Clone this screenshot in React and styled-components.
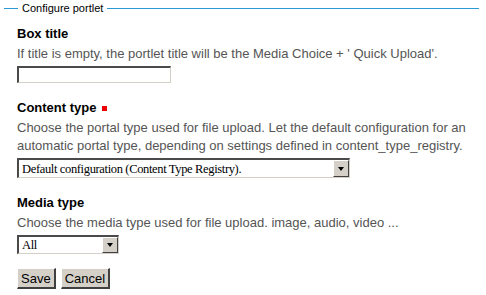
import React from "react";
import styled, { createGlobalStyle } from "styled-components";

const Global = createGlobalStyle`
  html, body { margin: 0; padding: 0; background: #fff; }
  body { font-family: "Liberation Sans", Arial, sans-serif; }
`;

const Page = styled.form`
  width: 486px;
  height: 295px;
  padding: 0 7px 0 4px;
  box-sizing: border-box;
`;

const Legend = styled.div`
  display: flex;
  align-items: center;
  height: 16px;
  font-size: 11px;
  color: #000;
`;

const LegendLine = styled.span`
  height: 1px;
  background: #2a9ad6;
  flex: ${(p) => (p.$grow ? "1" : "none")};
  width: ${(p) => (p.$grow ? "auto" : "14px")};
`;

const LegendText = styled.span`
  padding: 0 4px;
`;

const Body = styled.div`
  padding: 9px 0 0 13px;
  display: flex;
  flex-direction: column;
  gap: 16px;
`;

const Field = styled.div`
  display: flex;
  flex-direction: column;
  align-items: flex-start;
  gap: 3px;
`;

const Label = styled.label`
  font-size: 13px;
  font-weight: bold;
  line-height: 17px;
  color: #000;
  display: flex;
  align-items: center;
`;

const Required = styled.span`
  display: inline-block;
  width: 5px;
  height: 5px;
  background: #e00;
  margin-left: 6px;
  margin-top: 2px;
`;

const Help = styled.div`
  font-size: 13px;
  line-height: 18px;
  color: #555;
`;

const TextInput = styled.input`
  width: 154px;
  height: 17px;
  box-sizing: border-box;
  margin: 0;
  padding: 0 2px;
  border-style: solid;
  border-width: 2px 1px 1px 2px;
  border-color: #4a4a4a #d4d0c8 #d4d0c8 #4a4a4a;
  background: #fff;
  font: 12px "Liberation Sans", Arial, sans-serif;
  outline: none;
`;

const SelectBox = styled.div`
  display: inline-flex;
  align-items: stretch;
  width: ${(p) => p.$w}px;
  height: ${(p) => p.$h}px;
  box-sizing: border-box;
  border-style: solid;
  border-width: 2px 1px 1px 2px;
  border-color: #4a4a4a #d4d0c8 #d4d0c8 #4a4a4a;
  background: #fff;
`;

const NativeSelect = styled.select`
  appearance: none;
  -webkit-appearance: none;
  flex: 1;
  min-width: 0;
  border: none;
  margin: 0;
  padding: 0 3px;
  background: transparent;
  font: 12.5px "Liberation Serif", "Times New Roman", serif;
  letter-spacing: -0.35px;
  color: #000;
  outline: none;
`;

const ArrowButton = styled.span`
  width: 16px;
  box-sizing: border-box;
  background: #d4d0c8;
  border-style: solid;
  border-width: 1px;
  border-color: #fff #404040 #404040 #fff;
  display: flex;
  align-items: center;
  justify-content: center;
`;

const Triangle = styled.span`
  width: 0;
  height: 0;
  border-left: 3.5px solid transparent;
  border-right: 3.5px solid transparent;
  border-top: 4px solid #000;
`;

const Buttons = styled.div`
  display: flex;
  gap: 5px;
  margin-top: -2px;
`;

const Button = styled.button`
  height: 21px;
  margin: 0;
  padding: 0 3px;
  box-sizing: border-box;
  background: #d4d0c8;
  border-style: solid;
  border-width: 1px 2px 2px 1px;
  border-color: #fff #404040 #404040 #fff;
  font: 13px "Liberation Sans", Arial, sans-serif;
  color: #000;
`;

function Select({ w, h, options }) {
  return (
    <SelectBox $w={w} $h={h}>
      <NativeSelect defaultValue={options[0]}>
        {options.map((o) => (
          <option key={o}>{o}</option>
        ))}
      </NativeSelect>
      <ArrowButton>
        <Triangle />
      </ArrowButton>
    </SelectBox>
  );
}

export default function App() {
  return (
    <>
      <Global />
      <Page onSubmit={(e) => e.preventDefault()}>
        <Legend>
          <LegendLine />
          <LegendText>Configure portlet</LegendText>
          <LegendLine $grow />
        </Legend>
        <Body>
          <Field>
            <Label>Box title</Label>
            <Help>If title is empty, the portlet title will be the Media Choice + ' Quick Upload'.</Help>
            <TextInput type="text" />
          </Field>
          <Field>
            <Label>
              Content type <Required />
            </Label>
            <Help>
              Choose the portal type used for file upload. Let the default configuration for an
              <br />
              automatic portal type, depending on settings defined in content_type_registry.
            </Help>
            <Select w={333} h={20} options={["Default configuration (Content Type Registry)."]} />
          </Field>
          <Field>
            <Label>Media type</Label>
            <Help>Choose the media type used for file upload. image, audio, video ...</Help>
            <Select w={102} h={19} options={["All", "image", "audio", "video"]} />
          </Field>
          <Buttons>
            <Button type="submit">Save</Button>
            <Button type="button">Cancel</Button>
          </Buttons>
        </Body>
      </Page>
    </>
  );
}
